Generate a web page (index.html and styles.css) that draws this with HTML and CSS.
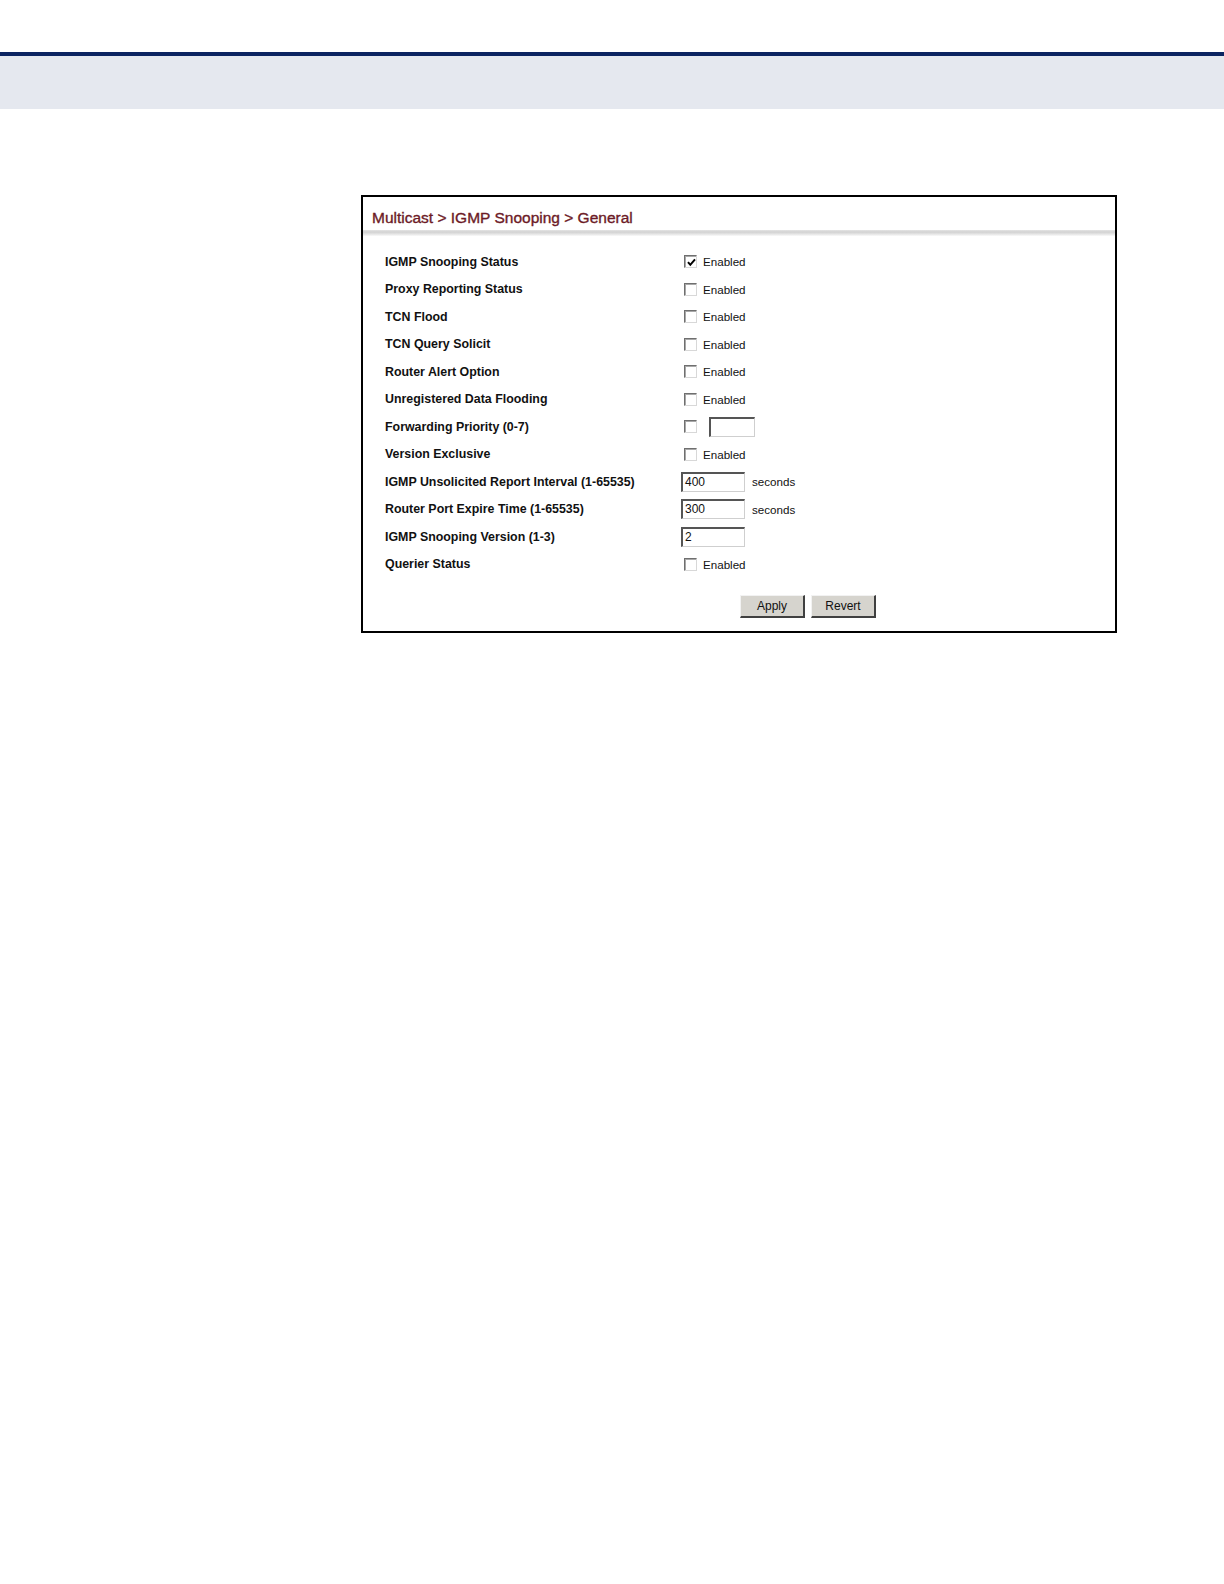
FILE: index.html
```html
<!DOCTYPE html>
<html>
<head>
<meta charset="utf-8">
<title>IGMP Snooping General</title>
<link rel="stylesheet" href="styles.css">
</head>
<body>
<header class="page-header">
  <div class="rule"></div>
  <div class="band"></div>
</header>
<main class="content">
  <section class="panel">
    <h1 class="title">Multicast &gt; IGMP Snooping &gt; General</h1>
    <div class="separator"></div>
    <div class="rows">
      <div class="row"><span class="label">IGMP Snooping Status</span><span class="value"><span class="cb checked"><svg viewBox="0 0 9 9" width="9" height="9"><path d="M1 4.2 L3.3 6.8 L8 1.4" fill="none" stroke="#000" stroke-width="2"/></svg></span><span class="txt">Enabled</span></span></div>
      <div class="row"><span class="label">Proxy Reporting Status</span><span class="value"><span class="cb"></span><span class="txt">Enabled</span></span></div>
      <div class="row"><span class="label">TCN Flood</span><span class="value"><span class="cb"></span><span class="txt">Enabled</span></span></div>
      <div class="row"><span class="label">TCN Query Solicit</span><span class="value"><span class="cb"></span><span class="txt">Enabled</span></span></div>
      <div class="row"><span class="label">Router Alert Option</span><span class="value"><span class="cb"></span><span class="txt">Enabled</span></span></div>
      <div class="row"><span class="label">Unregistered Data Flooding</span><span class="value"><span class="cb"></span><span class="txt">Enabled</span></span></div>
      <div class="row"><span class="label">Forwarding Priority (0-7)</span><span class="value"><span class="cb"></span><span class="field small"></span></span></div>
      <div class="row"><span class="label">Version Exclusive</span><span class="value"><span class="cb"></span><span class="txt">Enabled</span></span></div>
      <div class="row"><span class="label">IGMP Unsolicited Report Interval (1-65535)</span><span class="value"><span class="field">400</span><span class="unit">seconds</span></span></div>
      <div class="row"><span class="label">Router Port Expire Time (1-65535)</span><span class="value"><span class="field">300</span><span class="unit">seconds</span></span></div>
      <div class="row"><span class="label">IGMP Snooping Version (1-3)</span><span class="value"><span class="field">2</span></span></div>
      <div class="row"><span class="label">Querier Status</span><span class="value"><span class="cb"></span><span class="txt">Enabled</span></span></div>
    </div>
    <div class="buttons">
      <span class="btn">Apply</span>
      <span class="btn">Revert</span>
    </div>
  </section>
</main>
</body>
</html>
```

FILE: styles.css
```css
html, body {
  margin: 0;
  padding: 0;
  background: #ffffff;
  font-family: "Liberation Sans", Arial, sans-serif;
}

.page-header {
  padding-top: 52px;
}

.rule {
  height: 4px;
  background: #0b2461;
}

.band {
  height: 53px;
  background: #e5e8ef;
}

.content {
  padding: 86px 0 0 361px;
}

.panel {
  width: 752px;
  border: 2px solid #000000;
  background: #ffffff;
  padding-bottom: 13px;
}

.title {
  margin: 0;
  padding: 10px 0 0 9px;
  font-size: 15.5px;
  line-height: 22px;
  font-weight: normal;
  color: #6c1a26;
  -webkit-text-stroke: 0.35px #6c1a26;
}

.separator {
  margin-top: 1px;
  height: 6px;
  background: linear-gradient(to bottom, #e4e4e4 0%, #d2d2d2 35%, #e6e6e6 70%, #fafafa 100%);
}

.rows {
  padding: 11.8px 0 0 22px;
}

.row {
  display: flex;
  align-items: center;
  height: 27.54px;
}

.label {
  width: 296px;
  font-size: 12.4px;
  font-weight: bold;
  color: #111111;
}

.value {
  display: flex;
  align-items: center;
}

.cb {
  box-sizing: border-box;
  width: 13px;
  height: 13px;
  margin-left: 3px;
  border-style: solid;
  border-width: 1px;
  border-color: #6f6f6f #d8d8d8 #d8d8d8 #6f6f6f;
  box-shadow: inset 1px 1px 0 #a8a8a8;
  background: #ffffff;
  display: flex;
  align-items: center;
  justify-content: center;
}

.cb svg {
  display: block;
  margin: 1px 0 0 1px;
}

.txt {
  margin-left: 6px;
  font-size: 11.6px;
  color: #111111;
}

.field {
  box-sizing: border-box;
  width: 64px;
  height: 20px;
  border-style: solid;
  border-width: 2px 1px 1px 2px;
  border-color: #555555 #cfcfcf #cfcfcf #555555;
  font-size: 12px;
  line-height: 17px;
  padding-left: 2px;
  color: #111111;
  background: #ffffff;
}

.field.small {
  width: 46px;
  margin-left: 12px;
}

.unit {
  margin-left: 7px;
  font-size: 11.6px;
  color: #111111;
}

.buttons {
  display: flex;
  gap: 6px;
  padding: 16.5px 0 0 377px;
}

.btn {
  box-sizing: border-box;
  width: 65px;
  height: 23px;
  display: flex;
  align-items: center;
  justify-content: center;
  background: #d6d4ce;
  border-style: solid;
  border-width: 1px 2px 2px 1px;
  border-color: #f2f2f2 #404040 #404040 #f2f2f2;
  font-size: 12px;
  color: #111111;
}
```
